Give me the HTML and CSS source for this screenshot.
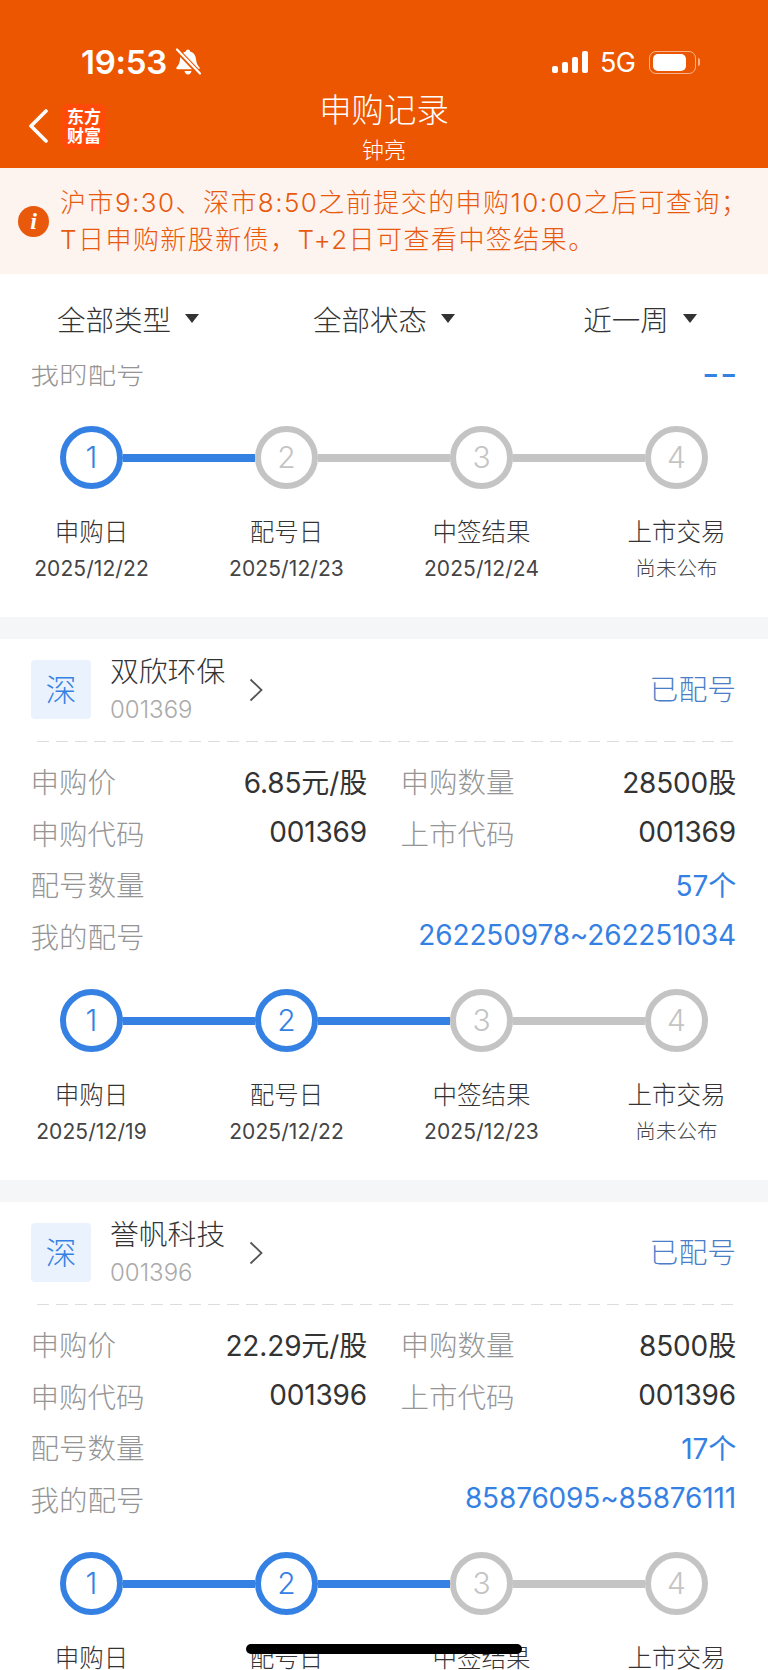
FILE: index.html
```html
<!DOCTYPE html>
<html lang="zh-CN">
<head>
    <meta charset="UTF-8">
    <title>申购记录</title>
    <link rel="stylesheet" href="styles.css">
</head>
<body>
<div class="page">

    <header class="top">
        <div class="statusbar">
            <div class="status-left">
                <span class="time">19:53</span>
                <svg class="bell" viewBox="0 0 26 28" width="26" height="28">
                    <path d="M13 1.5c1.2 0 2 .8 2.1 1.9 3.6.9 5.6 3.8 5.9 7.6.3 3.8 1.2 6 3.4 8.3.7.8.2 1.9-.9 1.9H2.500c-1.100 0-1.600-1.100-.9-1.900 2.200-2.300 3.100-4.500 3.400-8.300.3-3.800 2.300-6.700 5.900-7.600.1-1.100.9-1.900 2.100-1.900z" fill="#fff"/>
                    <path d="M9.500 23h7c-.2 2-1.700 3.400-3.500 3.400S9.700 25 9.500 23z" fill="#fff"/>
                    <path d="M2.500 2.500l22 23" stroke="#ec5600" stroke-width="5"/>
                    <path d="M2 1.500l23 24" stroke="#fff" stroke-width="2.200" stroke-linecap="round"/>
                </svg>
            </div>
            <div class="status-right">
                <div class="signal"><i class="b1"></i><i class="b2"></i><i class="b3"></i><i class="b4"></i></div>
                <span class="net">5G</span>
                <div class="battery"><div class="battery-fill"></div></div>
                <div class="battery-nub"></div>
            </div>
        </div>
        <div class="nav">
            <div class="nav-left">
                <svg class="back" viewBox="0 0 20 34" width="20" height="34">
                    <path d="M18 2L3 17l15 15" fill="none" stroke="#fff" stroke-width="3.600" stroke-linecap="round" stroke-linejoin="round"/>
                </svg>
                <div class="logo">东方<br>财富</div>
            </div>
            <div class="nav-title">
                <div class="title">申购记录</div>
                <div class="subtitle">钟亮</div>
            </div>
        </div>
    </header>

    <div class="notice">
        <span class="notice-icon">i</span>
        <p class="notice-text">沪市9:30、深市8:50之前提交的申购10:00之后可查询；<br>T日申购新股新债，T+2日可查看中签结果。</p>
    </div>

    <div class="filters">
        <div class="filter">全部类型<span class="caret"></span></div>
        <div class="filter">全部状态<span class="caret"></span></div>
        <div class="filter">近一周<span class="caret"></span></div>
    </div>

    <!-- first card is scrolled under the filter bar -->
    <section class="card card-cut">
        <div class="row row-cut">
            <span class="label">我的配号</span>
            <span class="value blue dashes">--</span>
        </div>
        <div class="track">
            <span class="dot on">1</span><span class="line on"></span>
            <span class="dot">2</span><span class="line"></span>
            <span class="dot">3</span><span class="line"></span>
            <span class="dot">4</span>
        </div>
        <div class="steps">
            <div class="step"><div class="step-name">申购日</div><div class="step-date">2025/12/22</div></div>
            <div class="step"><div class="step-name">配号日</div><div class="step-date">2025/12/23</div></div>
            <div class="step"><div class="step-name">中签结果</div><div class="step-date">2025/12/24</div></div>
            <div class="step"><div class="step-name">上市交易</div><div class="step-date tbd">尚未公布</div></div>
        </div>
    </section>

    <section class="card">
        <div class="card-head">
            <span class="market">深</span>
            <div class="stock">
                <div class="stock-name">双欣环保</div>
                <div class="stock-code">001369</div>
            </div>
            <svg class="more" viewBox="0 0 14 24" width="14" height="24">
                <path d="M1.500 1.500L12.500 12 1.500 22.500" fill="none" stroke="#555" stroke-width="1.800"/>
            </svg>
            <span class="state">已配号</span>
        </div>
        <div class="grid">
            <div class="row"><span class="label">申购价</span><span class="value">6.85元/股</span></div>
            <div class="row"><span class="label">申购数量</span><span class="value">28500股</span></div>
            <div class="row"><span class="label">申购代码</span><span class="value">001369</span></div>
            <div class="row"><span class="label">上市代码</span><span class="value">001369</span></div>
        </div>
        <div class="row"><span class="label">配号数量</span><span class="value blue">57个</span></div>
        <div class="row"><span class="label">我的配号</span><span class="value blue">262250978~262251034</span></div>
        <div class="track">
            <span class="dot on">1</span><span class="line on"></span>
            <span class="dot on">2</span><span class="line on"></span>
            <span class="dot">3</span><span class="line"></span>
            <span class="dot">4</span>
        </div>
        <div class="steps">
            <div class="step"><div class="step-name">申购日</div><div class="step-date">2025/12/19</div></div>
            <div class="step"><div class="step-name">配号日</div><div class="step-date">2025/12/22</div></div>
            <div class="step"><div class="step-name">中签结果</div><div class="step-date">2025/12/23</div></div>
            <div class="step"><div class="step-name">上市交易</div><div class="step-date tbd">尚未公布</div></div>
        </div>
    </section>

    <section class="card">
        <div class="card-head">
            <span class="market">深</span>
            <div class="stock">
                <div class="stock-name">誉帆科技</div>
                <div class="stock-code">001396</div>
            </div>
            <svg class="more" viewBox="0 0 14 24" width="14" height="24">
                <path d="M1.500 1.500L12.500 12 1.500 22.500" fill="none" stroke="#555" stroke-width="1.800"/>
            </svg>
            <span class="state">已配号</span>
        </div>
        <div class="grid">
            <div class="row"><span class="label">申购价</span><span class="value">22.29元/股</span></div>
            <div class="row"><span class="label">申购数量</span><span class="value">8500股</span></div>
            <div class="row"><span class="label">申购代码</span><span class="value">001396</span></div>
            <div class="row"><span class="label">上市代码</span><span class="value">001396</span></div>
        </div>
        <div class="row"><span class="label">配号数量</span><span class="value blue">17个</span></div>
        <div class="row"><span class="label">我的配号</span><span class="value blue">85876095~85876111</span></div>
        <div class="track">
            <span class="dot on">1</span><span class="line on"></span>
            <span class="dot on">2</span><span class="line on"></span>
            <span class="dot">3</span><span class="line"></span>
            <span class="dot">4</span>
        </div>
        <div class="steps">
            <div class="step"><div class="step-name">申购日</div></div>
            <div class="step"><div class="step-name">配号日</div></div>
            <div class="step"><div class="step-name">中签结果</div></div>
            <div class="step"><div class="step-name">上市交易</div></div>
        </div>
    </section>

    <div class="home-bar"></div>
</div>
</body>
</html>
```

FILE: styles.css
```css
* {
    box-sizing: border-box;
}

body {
    margin: 0;
    font-family: Inter, "Noto Sans CJK SC", sans-serif;
    font-weight: 300;
    background-color: #f5f6f8;
    color: #333;
}

.page {
    position: relative;
    width: 768px;
    height: 1670px;
    overflow: hidden;
}

/* orange header */
.top {
    height: 168px;
    padding-top: 40px;
    background-color: #ec5600;
    color: #fff;
}

.statusbar {
    display: flex;
    justify-content: space-between;
    align-items: center;
    height: 44px;
    padding: 0 68px 0 81px;
}

.status-left {
    display: flex;
    align-items: center;
    gap: 8px;
}

.time {
    font-size: 33px;
    font-weight: 600;
    letter-spacing: -0.3px;
}

.status-right {
    display: flex;
    align-items: center;
}

.signal {
    display: flex;
    align-items: flex-end;
    gap: 4px;
    height: 22px;
}

.signal i {
    display: block;
    width: 6px;
    border-radius: 2px;
    background-color: #fff;
}

.signal .b1 { height: 7px; }
.signal .b2 { height: 11px; }
.signal .b3 { height: 16px; }
.signal .b4 { height: 22px; }

.net {
    margin: 0 13px 0 12px;
    font-size: 27px;
    font-weight: 400;
    letter-spacing: -0.5px;
}

.battery {
    width: 47px;
    height: 23px;
    padding: 2px 3px;
    border: 1.500px solid rgba(255,255,255,0.55);
    border-radius: 7px;
}

.battery-fill {
    width: 33px;
    height: 100%;
    border-radius: 5px;
    background-color: #fff;
}

.battery-nub {
    width: 2.500px;
    height: 8px;
    margin-left: 2px;
    border-radius: 0 2px 2px 0;
    background-color: rgba(255,255,255,0.55);
}

.nav {
    position: relative;
    display: flex;
    align-items: center;
    height: 84px;
}

.nav-left {
    display: flex;
    align-items: center;
    gap: 14px;
    padding-left: 28px;
}

.logo {
    width: 44px;
    height: 45px;
    padding-top: 4px;
    border-radius: 7px;
    background-color: #ff4a0a;
    font-size: 17px;
    font-weight: 700;
    line-height: 19px;
    text-align: center;
}

.nav-title {
    flex: 1;
    margin-left: -106px;
    text-align: center;
}

.title {
    margin-bottom: 3px;
    font-size: 32.400px;
    line-height: 44px;
}

.subtitle {
    font-size: 22px;
    line-height: 28px;
}

/* notice */
.notice {
    display: flex;
    align-items: center;
    gap: 11px;
    height: 106px;
    padding-left: 18px;
    background-color: #fdf3ef;
}

.notice-icon {
    flex: none;
    width: 31px;
    height: 31px;
    border-radius: 50%;
    background-color: #e8590c;
    color: #fff;
    font-family: "Liberation Serif", serif;
    font-size: 24px;
    font-style: italic;
    font-weight: 700;
    line-height: 31px;
    text-align: center;
}

.notice-text {
    margin: 0;
    color: #e8590c;
    font-size: 26px;
    letter-spacing: 1.450px;
    line-height: 37px;
    white-space: nowrap;
}

/* filters */
.filters {
    position: relative;
    z-index: 1;
    display: grid;
    grid-template-columns: repeat(3, 1fr);
    align-items: center;
    height: 91px;
    padding-bottom: 2px;
    background-color: #fff;
}

.filter {
    display: flex;
    justify-content: center;
    align-items: center;
    gap: 14px;
    font-size: 28.500px;
}

.caret {
    width: 0;
    height: 0;
    border-left: 7px solid transparent;
    border-right: 7px solid transparent;
    border-top: 9px solid #333;
}

/* cards */
.card {
    margin-bottom: 22px;
    padding: 0 32px;
    background-color: #fff;
}

.card-head {
    display: flex;
    align-items: center;
    box-sizing: content-box;
    height: 59px;
    margin: 0 3px 0 -1px;
    padding-top: 21px;
    padding-bottom: 23px;
    background-image: linear-gradient(90deg, transparent 7px, #ddd 7px);
    background-position: right bottom;
    background-repeat: repeat-x;
    background-size: 19px 1px;
}

.market {
    width: 60px;
    height: 59px;
    margin-right: 19px;
    border-radius: 4px;
    background-color: #eaf3fd;
    color: #3581e3;
    font-size: 31px;
    line-height: 60px;
    text-align: center;
}

.stock {
    width: 139px;
    margin-top: 2px;
}

.stock-name {
    font-size: 28.800px;
    line-height: 36px;
}

.stock-code {
    margin-top: 2px;
    color: #aaa;
    font-size: 24px;
    line-height: 36px;
}

.more {
    flex: none;
}

.state {
    margin-left: auto;
    margin-right: -3px;
    margin-top: -4px;
    color: #4a7fc8;
    font-size: 28.800px;
}

.grid {
    display: grid;
    grid-template-columns: 335px 334px;
    column-gap: 35px;
    padding-top: 13px;
}

.row {
    display: flex;
    justify-content: space-between;
    align-items: center;
    height: 51.500px;
    font-size: 28px;
}

.row-cut {
    align-items: flex-start;
    height: 33px;
    overflow: hidden;
}

.row-cut span {
    margin-top: -17px;
    line-height: 51.500px;
}

.label {
    margin-left: -1.500px;
    color: #959595;
    font-size: 28.500px;
}

.value {
    color: #333;
    font-weight: 400;
    letter-spacing: -0.150px;
}

.blue {
    color: #3581e3;
}

.row-cut .dashes {
    margin-right: -2px;
    font-size: 38px;
    letter-spacing: 0.500px;
}

/* progress */
.track {
    display: flex;
    align-items: center;
    margin: 28px 0 0 28px;
}

.dot {
    flex: none;
    width: 63px;
    height: 63px;
    border: 6px solid #c4c4c4;
    border-radius: 50%;
    color: #c4c4c4;
    font-size: 30px;
    font-weight: 300;
    line-height: 51px;
    text-align: center;
}

.dot.on {
    border-color: #3581e3;
    color: #3581e3;
}

.line {
    flex: none;
    width: 132px;
    height: 8px;
    background-color: #c4c4c4;
}

.line.on {
    background-color: #3581e3;
}

.steps {
    display: grid;
    grid-template-columns: repeat(4, 195px);
    justify-content: center;
    padding-top: 26px;
    padding-bottom: 33px;
    margin: 0 -32px;
    text-align: center;
}

.step-name {
    font-size: 24.500px;
    line-height: 34px;
}

.step-date {
    margin-top: 5px;
    color: #444;
    font-size: 21px;
    font-weight: 400;
    letter-spacing: 0.100px;
    line-height: 30px;
}

.step-date.tbd {
    font-size: 20.500px;
    font-weight: 300;
}

.home-bar {
    position: absolute;
    left: 246px;
    top: 1644px;
    width: 276px;
    height: 10px;
    border-radius: 5px;
    background-color: #000;
}
```
